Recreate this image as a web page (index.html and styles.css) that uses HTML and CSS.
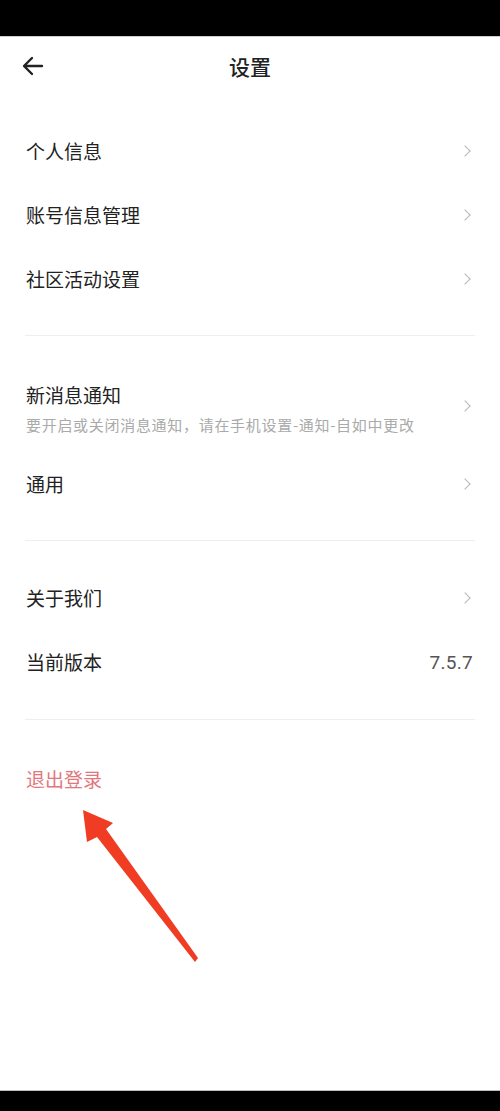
FILE: index.html
```html
<!DOCTYPE html>
<html lang="zh-CN">
<head>
<meta charset="utf-8">
<title>设置</title>
<link rel="stylesheet" href="styles.css">
</head>
<body>
<div class="screen">
  <div class="statusbar"></div>
  <header class="navbar">
    <svg class="back" width="22" height="20" viewBox="0 0 22 20" aria-hidden="true">
      <path d="M20 10H3M10 2L2 10l8 8" fill="none" stroke="#222" stroke-width="2.4" stroke-linecap="round" stroke-linejoin="round"/>
    </svg>
    <h1 class="title">设置</h1>
  </header>

  <main class="content">
    <section class="group">
      <div class="row"><span class="label">个人信息</span><span class="chev"></span></div>
      <div class="row"><span class="label">账号信息管理</span><span class="chev"></span></div>
      <div class="row"><span class="label">社区活动设置</span><span class="chev"></span></div>
    </section>
    <section class="group">
      <div class="row row-tall">
        <div class="stack">
          <span class="label">新消息通知</span>
          <span class="sub">要开启或关闭消息通知，请在手机设置-通知-自如中更改</span>
        </div>
        <span class="chev"></span>
      </div>
      <div class="row"><span class="label">通用</span><span class="chev"></span></div>
    </section>
    <section class="group group-about">
      <div class="row"><span class="label">关于我们</span><span class="chev"></span></div>
      <div class="row"><span class="label">当前版本</span><span class="version">7.5.7</span></div>
    </section>
    <section class="group last">
      <div class="row"><span class="label logout">退出登录</span></div>
    </section>
  </main>

  <svg class="pointer" width="500" height="1111" viewBox="0 0 500 1111" aria-hidden="true">
    <polygon points="83,810 113,823 106,829 198,958 195,962 97,837 87,842" fill="#f03c22"/>
  </svg>

  <div class="navbottom"></div>
</div>
</body>
</html>
```

FILE: styles.css
```css
* { box-sizing: border-box; }
html, body { margin: 0; padding: 0; background: #fff; }
body {
  font-family: "Noto Sans CJK SC", "Noto Sans", sans-serif;
  color: #222;
}
.screen {
  position: relative;
  width: 500px;
  height: 1111px;
  display: flex;
  flex-direction: column;
  overflow: hidden;
}
.statusbar {
  height: 37px;
  background: #000;
  border-bottom: 1px solid #cfcfcf;
  flex: none;
}
.navbar {
  position: relative;
  height: 58px;
  display: flex;
  align-items: center;
  justify-content: center;
  flex: none;
}
.back {
  position: absolute;
  left: 22px;
  top: 19px;
}
.title {
  margin: 0;
  font-size: 21px;
  font-weight: 500;
  color: #222;
  line-height: 28px;
}
.content {
  flex: 1;
  display: flex;
  flex-direction: column;
}
.group {
  margin: 0 25px;
  padding: 24px 0;
  border-bottom: 1px solid #eeeeee;
}
.group-about { padding: 25px 0; }
.group.last { border-bottom: none; padding-top: 27px; }
.row {
  height: 64px;
  display: flex;
  align-items: center;
  justify-content: space-between;
  padding: 0 2px 0 1px;
}
.row-tall {
  height: 92px;
}
.stack {
  display: flex;
  flex-direction: column;
  padding-top: 4px;
}
.label {
  font-size: 19px;
  line-height: 28px;
  color: #222;
}
.sub {
  margin-top: 6px;
  font-size: 15px;
  line-height: 20px;
  letter-spacing: 0.7px;
  color: #aaaaaa;
  white-space: nowrap;
}
.chev {
  width: 8px;
  height: 8px;
  border-top: 1.5px solid #b8b8b8;
  border-right: 1.5px solid #b8b8b8;
  transform: rotate(45deg);
  margin-right: 4px;
}
.version {
  font-family: "Roboto", "Noto Sans", sans-serif;
  font-size: 19px;
  color: #555;
  letter-spacing: 0.3px;
}
.logout {
  color: #e2767c;
}
.pointer {
  position: absolute;
  left: 0;
  top: 0;
  pointer-events: none;
}
.navbottom {
  position: absolute;
  left: 0;
  bottom: 0;
  width: 500px;
  height: 21px;
  background: #000;
  border-top: 1px solid #bdbdbd;
}
```
